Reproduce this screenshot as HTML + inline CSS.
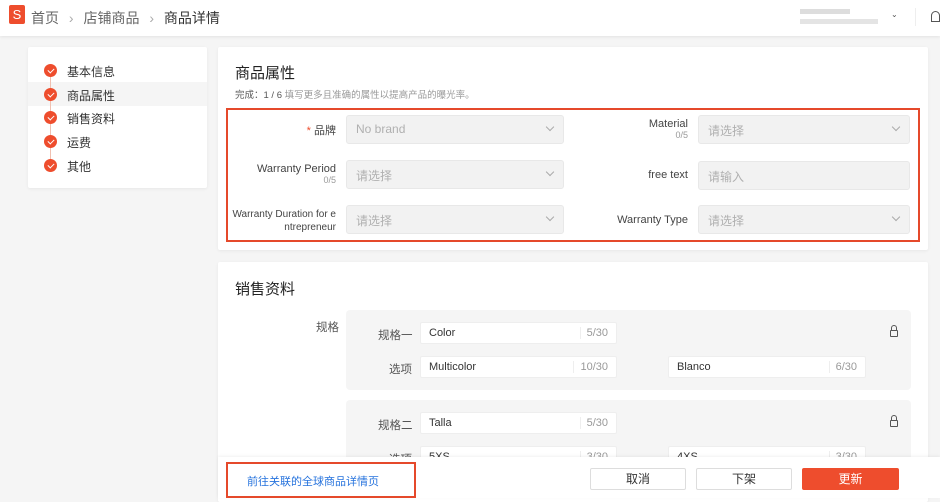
<!DOCTYPE html><html><head><meta charset="utf-8"><style>
*{box-sizing:border-box;margin:0;padding:0}
body{width:940px;height:498px;overflow:hidden;background:#f5f5f5;font-family:"Liberation Sans","Noto Sans CJK SC",sans-serif;font-size:12px;color:#333;position:relative}
.a{position:absolute}
.hdr{left:0;top:0;width:940px;height:36px;background:#fff;box-shadow:0 1px 3px rgba(0,0,0,.08)}
.card{background:#fff;border-radius:2px;box-shadow:0 1px 3px rgba(0,0,0,.06)}
.inp{background:#f2f2f2;border:1px solid #e8e8e8;border-radius:3px;height:29px;color:#b0b0b0;padding:6px 9px;font-size:12px}
.chev{position:absolute;right:10px;top:8px;width:6px;height:6px;border-right:1px solid #aaa;border-bottom:1px solid #aaa;transform:rotate(45deg)}
.lbl{text-align:right;font-size:11px;color:#444}
.sub{font-size:9px;color:#999;display:block}
.w{background:#fff;border:1px solid #eee;border-radius:2px;height:22px;padding:4px 8px;font-size:11px;color:#333}
.cnt{position:absolute;right:8px;top:4px;color:#999;border-left:1px solid #eee;padding-left:6px}
.dot{width:13px;height:13px;border-radius:50%;background:#ee4d2d;left:44px}
.dot:after{content:"";position:absolute;left:3.5px;top:3.5px;width:5px;height:3px;border-left:1.5px solid #fff;border-bottom:1.5px solid #fff;transform:rotate(-45deg)}
.btn{height:22px;border:1px solid #ddd;border-radius:2px;background:#fff;text-align:center;line-height:20px;font-size:12px;color:#333}
</style></head><body>
<div class="a hdr"></div>
<div class="a" style="left:9px;top:5px;width:16px;height:19px;background:#ee4d2d;border-radius:2px;color:#fff;font-size:13px;text-align:center;line-height:20px">S</div>
<div class="a" style="left:31px;top:8px;font-size:14px;color:#666">首页 <span style="color:#aaa;margin:0 6px">›</span> 店铺商品 <span style="color:#aaa;margin:0 6px">›</span> <span style="color:#333">商品详情</span></div>
<div class="a" style="left:800px;top:9px;width:50px;height:5px;background:#ddd"></div>
<div class="a" style="left:800px;top:19px;width:78px;height:5px;background:#e4e4e4"></div>
<div class="a" style="left:891px;top:10px;font-size:8px;color:#555">⌄</div>
<div class="a" style="left:915px;top:8px;width:1px;height:18px;background:#eee"></div>
<div class="a" style="left:931px;top:11px;width:9px;height:11px;border:1.3px solid #555;border-radius:5px 5px 0 0"></div>

<div class="a card" style="left:28px;top:47px;width:179px;height:141px"></div>
<div class="a" style="left:28px;top:82px;width:179px;height:24px;background:#f5f5f5"></div>
<div class="a" style="left:50px;top:70px;width:1px;height:95px;background:#f0c0b0"></div>
<div class="a dot" style="top:64px"></div><div class="a" style="left:67px;top:63px;font-size:12px">基本信息</div>
<div class="a dot" style="top:88px"></div><div class="a" style="left:67px;top:87px;font-size:12px">商品属性</div>
<div class="a dot" style="top:111px"></div><div class="a" style="left:67px;top:110px;font-size:12px">销售资料</div>
<div class="a dot" style="top:135px"></div><div class="a" style="left:67px;top:134px;font-size:12px">运费</div>
<div class="a dot" style="top:159px"></div><div class="a" style="left:67px;top:158px;font-size:12px">其他</div>

<div class="a card" style="left:218px;top:47px;width:710px;height:203px"></div>
<div class="a" style="left:235px;top:62px;font-size:15px;color:#222">商品属性</div>
<div class="a" style="left:235px;top:87px;font-size:9.5px;color:#999"><span style="color:#555">完成：1 / 6</span> 填写更多且准确的属性以提高产品的曝光率。</div>
<div class="a" style="left:226px;top:108px;width:694px;height:134px;border:2px solid #e5492b"></div>

<div class="a lbl" style="left:230px;top:122px;width:106px"><span style="color:#ee4d2d">*</span> 品牌</div>
<div class="a inp" style="left:346px;top:115px;width:218px">No brand<i class="chev"></i></div>
<div class="a lbl" style="left:230px;top:163px;width:106px">Warranty Period<span class="sub">0/5</span></div>
<div class="a inp" style="left:346px;top:160px;width:218px">请选择<i class="chev"></i></div>
<div class="a lbl" style="left:226px;top:208px;width:110px;line-height:13px;white-space:nowrap;font-size:10px">Warranty Duration for e<br>ntrepreneur</div>
<div class="a inp" style="left:346px;top:205px;width:218px">请选择<i class="chev"></i></div>

<div class="a lbl" style="left:580px;top:118px;width:108px">Material<span class="sub">0/5</span></div>
<div class="a inp" style="left:698px;top:115px;width:212px">请选择<i class="chev"></i></div>
<div class="a lbl" style="left:580px;top:169px;width:108px">free text</div>
<div class="a inp" style="left:698px;top:161px;width:212px">请输入</div>
<div class="a lbl" style="left:580px;top:214px;width:108px">Warranty Type</div>
<div class="a inp" style="left:698px;top:205px;width:212px">请选择<i class="chev"></i></div>

<div class="a card" style="left:218px;top:262px;width:710px;height:240px"></div>
<div class="a" style="left:235px;top:278px;font-size:15px;color:#222">销售资料</div>
<div class="a" style="left:316px;top:319px;font-size:11.5px;color:#555">规格</div>
<div class="a" style="left:346px;top:310px;width:565px;height:80px;background:#f5f5f5;border-radius:4px"></div>
<div class="a" style="left:346px;top:400px;width:565px;height:70px;background:#f5f5f5;border-radius:4px"></div>
<div class="a" style="left:378px;top:327px;font-size:11.5px;color:#555">规格一</div>
<div class="a w" style="left:420px;top:322px;width:197px">Color<span class="cnt">5/30</span></div>
<div class="a" style="left:389px;top:361px;font-size:11.5px;color:#555">选项</div>
<div class="a w" style="left:420px;top:356px;width:197px">Multicolor<span class="cnt">10/30</span></div>
<div class="a w" style="left:668px;top:356px;width:198px">Blanco<span class="cnt">6/30</span></div>
<div class="a" style="left:890px;top:330px;width:8px;height:7px;border:1.2px solid #555;border-radius:1px"></div>
<div class="a" style="left:891px;top:325px;width:6px;height:6px;border:1.2px solid #555;border-bottom:none;border-radius:3px 3px 0 0"></div>
<div class="a" style="left:378px;top:417px;font-size:11.5px;color:#555">规格二</div>
<div class="a w" style="left:420px;top:412px;width:197px">Talla<span class="cnt">5/30</span></div>
<div class="a" style="left:389px;top:451px;font-size:11.5px;color:#555">选项</div>
<div class="a w" style="left:420px;top:446px;width:197px">5XS<span class="cnt">3/30</span></div>
<div class="a w" style="left:668px;top:446px;width:198px">4XS<span class="cnt">3/30</span></div>
<div class="a" style="left:890px;top:420px;width:8px;height:7px;border:1.2px solid #555;border-radius:1px"></div>
<div class="a" style="left:891px;top:415px;width:6px;height:6px;border:1.2px solid #555;border-bottom:none;border-radius:3px 3px 0 0"></div>

<div class="a" style="left:218px;top:457px;width:722px;height:41px;background:#fff;box-shadow:0 -1px 3px rgba(0,0,0,.06)"></div>
<div class="a" style="left:226px;top:462px;width:190px;height:36px;border:2px solid #e5492b"></div>
<div class="a" style="left:247px;top:473px;font-size:11px;color:#2673dd">前往关联的全球商品详情页</div>
<div class="a btn" style="left:590px;top:468px;width:96px">取消</div>
<div class="a btn" style="left:696px;top:468px;width:96px">下架</div>
<div class="a btn" style="left:802px;top:468px;width:97px;background:#ee4d2d;border-color:#ee4d2d;color:#fff">更新</div>
</body></html>
